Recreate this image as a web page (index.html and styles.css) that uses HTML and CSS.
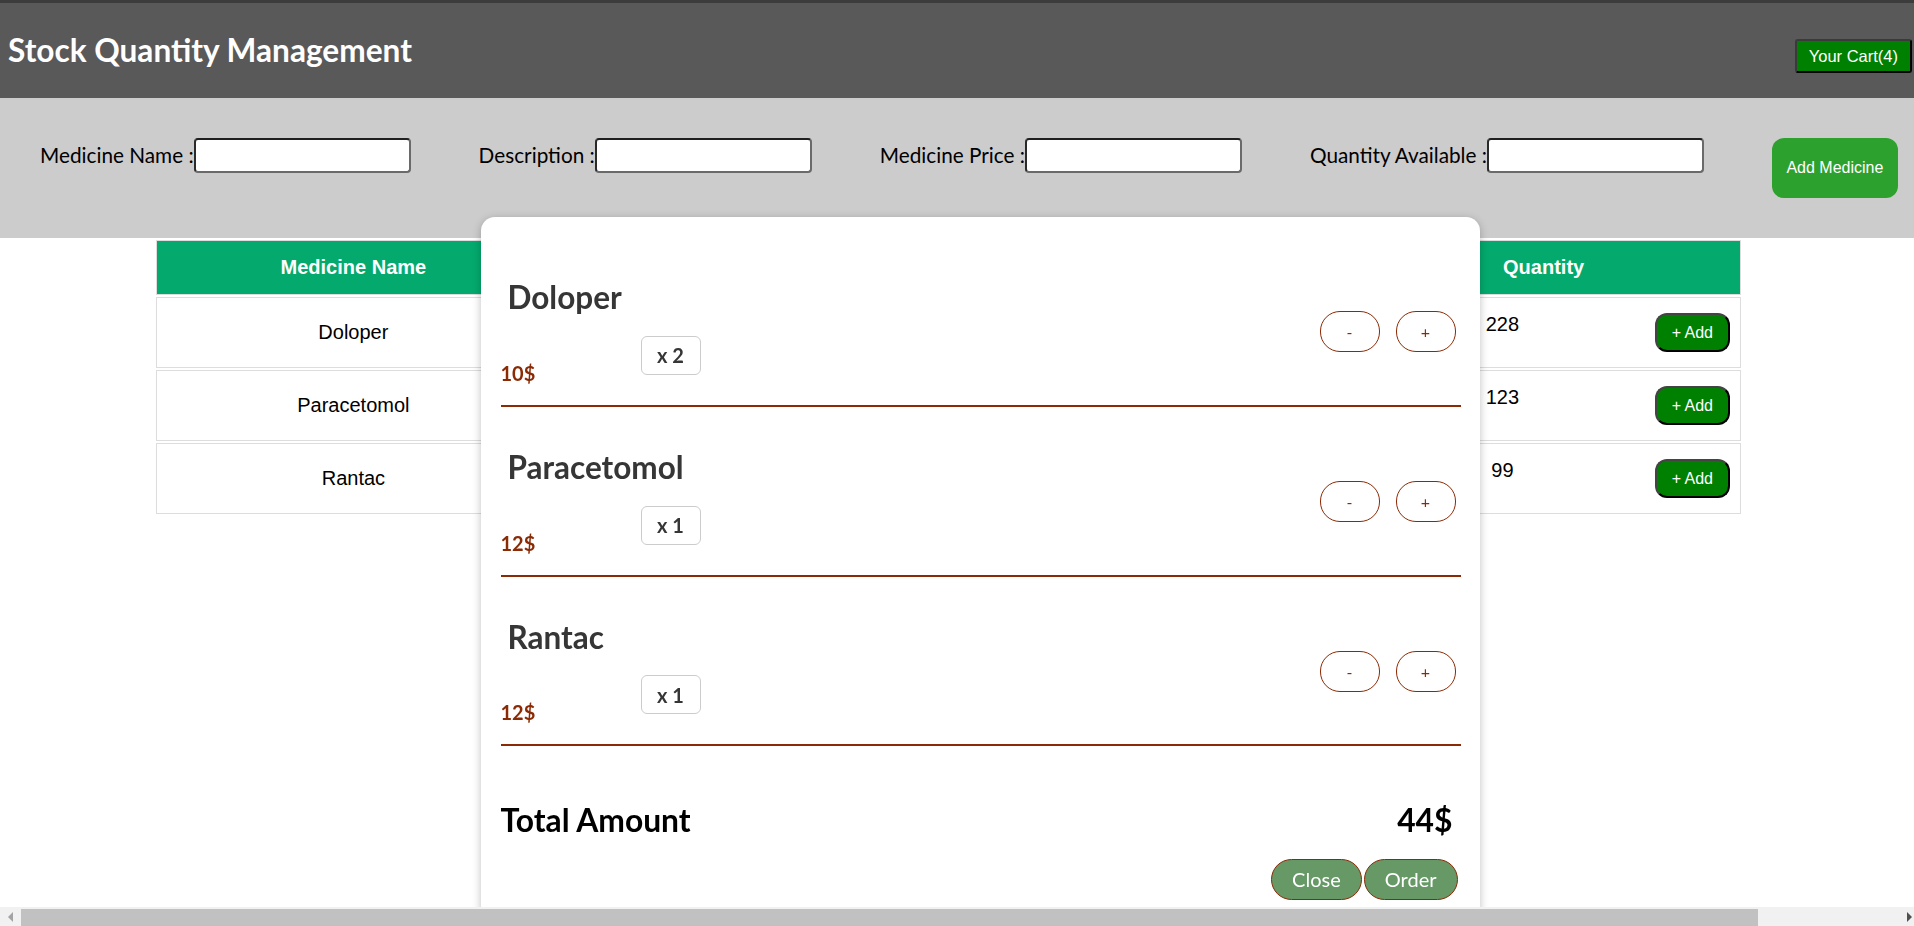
FILE: index.html
```html
<!DOCTYPE html>
<html lang="en">
<head>
<meta charset="utf-8">
<title>Stock Quantity Management</title>
<link rel="stylesheet" href="styles.css">
</head>
<body>
<header class="topbar">
  <h1 class="title">Stock Quantity Management</h1>
  <button class="cart-btn" type="button">Your Cart(4)</button>
</header>

<form class="med-form">
  <div class="field"><label for="m-name">Medicine Name :</label><input id="m-name" type="text"></div>
  <div class="field"><label for="m-desc">Description :</label><input id="m-desc" type="text"></div>
  <div class="field"><label for="m-price">Medicine Price :</label><input id="m-price" type="text"></div>
  <div class="field"><label for="m-qty">Quantity Available :</label><input id="m-qty" type="text"></div>
  <button class="add-med" type="button">Add Medicine</button>
</form>

<table class="stock">
  <thead>
    <tr><th>Medicine Name</th><th>Description</th><th>Price</th><th>Quantity</th></tr>
  </thead>
  <tbody>
    <tr><td>Doloper</td><td>For fever</td><td>10</td><td class="qty"><button class="add-btn" type="button">+ Add</button>228</td></tr>
    <tr><td>Paracetomol</td><td>For headache</td><td>12</td><td class="qty"><button class="add-btn" type="button">+ Add</button>123</td></tr>
    <tr><td>Rantac</td><td>For acidity</td><td>12</td><td class="qty"><button class="add-btn" type="button">+ Add</button>99</td></tr>
  </tbody>
</table>

<div class="modal">
  <ul class="cart-items">
    <li class="cart-item">
      <div class="item-info">
        <h2 class="item-name">Doloper</h2>
        <div class="summary"><span class="price">10$</span><span class="amount">x 2</span></div>
      </div>
      <div class="qty-actions"><button type="button">-</button><button type="button">+</button></div>
    </li>
    <li class="cart-item">
      <div class="item-info">
        <h2 class="item-name">Paracetomol</h2>
        <div class="summary"><span class="price">12$</span><span class="amount">x 1</span></div>
      </div>
      <div class="qty-actions"><button type="button">-</button><button type="button">+</button></div>
    </li>
    <li class="cart-item">
      <div class="item-info">
        <h2 class="item-name">Rantac</h2>
        <div class="summary"><span class="price">12$</span><span class="amount">x 1</span></div>
      </div>
      <div class="qty-actions"><button type="button">-</button><button type="button">+</button></div>
    </li>
  </ul>
  <div class="total"><span>Total Amount</span><span>44$</span></div>
  <div class="modal-actions"><button type="button">Close</button><button type="button">Order</button></div>
</div>

<div class="hscroll">
  <span class="arrow arrow-left"></span>
  <span class="thumb"></span>
  <span class="arrow arrow-right"></span>
</div>
</body>
</html>
```

FILE: styles.css
```css
html, body {
  margin: 0;
  overflow: hidden;
}

body {
  font-family: Lato, "Open Sans", sans-serif;
  background: #fff;
  color: #000;
}

/* header */
.topbar {
  display: flex;
  justify-content: space-between;
  align-items: center;
  height: 95px;
  border-top: 3px solid #3c3c3c;
  background: #595959;
}

.title {
  margin: 0 0 0 8px;
  font: 700 31.6px/1.2 Lato, sans-serif;
  color: #fff;
}

.cart-btn {
  align-self: flex-start;
  margin: 36px 2px 0 0;
  padding: 6px 12px;
  font: 16.5px/18px "Liberation Sans", Arial, sans-serif;
  color: #fff;
  background: #008000;
  border: 2px solid;
  border-color: #3a3a3a #000 #000 #3a3a3a;
  border-radius: 3px;
}

/* form */
.med-form {
  display: flex;
  align-items: flex-start;
  gap: 68px;
  padding: 40px 0 40px 40px;
  background: #ccc;
}

.field {
  display: flex;
  align-items: center;
  height: 35px;
}

.field label {
  font-size: 20.75px;
  line-height: 1.2;
  color: #000;
}

.field input {
  width: 217px;
  height: 35px;
  box-sizing: border-box;
  padding: 1px 4px;
  border: 2px solid;
  border-color: #1f1f1f #6a6a6a #6a6a6a #2a2a2a;
  border-radius: 4px;
  background: #fff;
  font: 16px "Liberation Sans", Arial, sans-serif;
}

.add-med {
  height: 60px;
  padding: 0 14.5px;
  font: 16px/18px "Liberation Sans", Arial, sans-serif;
  color: #fff;
  background: #2da12d;
  border: 0;
  border-radius: 12px;
}

/* table */
.stock {
  margin-left: 154px;
  width: 1589px;
  table-layout: fixed;
  border-spacing: 2px;
  font: 20px "Liberation Sans", Arial, sans-serif;
}

.stock th {
  padding: 14px 10px 15px;
  line-height: 24px;
  font-weight: 700;
  color: #fff;
  background: #04aa6d;
  border: 1px solid #ddd;
}

.stock td {
  padding: 15px 10px;
  line-height: 23px;
  text-align: center;
  border: 1px solid #ddd;
}

.add-btn {
  float: right;
  margin-left: 7px;
  padding: 9px 15px;
  font: 16px/17px "Liberation Sans", Arial, sans-serif;
  color: #fff;
  background: #008000;
  border: 2px solid;
  border-color: #444 #000 #000 #444;
  border-radius: 12px;
}

/* cart modal */
.modal {
  position: fixed;
  left: 481px;
  top: 217px;
  width: 960px;
  padding: 20px 19.5px;
  background: #fff;
  border-radius: 14px;
  box-shadow: 0 2px 8px rgba(0, 0, 0, 0.25);
  z-index: 10;
}

.cart-items {
  list-style: none;
  margin: 0;
  padding: 0;
}

.cart-item {
  display: flex;
  justify-content: space-between;
  align-items: center;
  margin: 20px 0;
  padding: 22px 0 20px;
  border-bottom: 2px solid #8a2b06;
}

.item-name {
  margin: 0 0 19px 7px;
  font-size: 31.5px;
  line-height: 1.2;
  font-weight: 700;
  color: #363636;
}

.summary {
  display: flex;
  justify-content: space-between;
  align-items: flex-end;
  width: 200px;
}

.price {
  font-size: 20px;
  line-height: 1.2;
  font-weight: 700;
  color: #8a2b06;
}

.amount {
  width: 60px;
  box-sizing: border-box;
  margin-bottom: 10px;
  padding: 6.5px 0;
  text-align: center;
  font-size: 20px;
  line-height: 1.2;
  font-weight: 700;
  color: #363636;
  border: 1px solid #ccc;
  border-radius: 6px;
}

.qty-actions {
  display: flex;
}

.qty-actions button {
  width: 60px;
  height: 41px;
  margin-left: 16px;
  padding: 0;
  font: 16px Lato, sans-serif;
  color: #8a2b06;
  background: #fff;
  border: 1px solid #8a2b06;
  border-radius: 20px;
}

.qty-actions button:last-child {
  margin-right: 5px;
}

.total {
  display: flex;
  justify-content: space-between;
  align-items: center;
  margin: 56px 8px 0 0;
  font-size: 31.8px;
  line-height: 1.15;
  font-weight: 700;
}

.modal-actions {
  display: flex;
  justify-content: flex-end;
  gap: 2px;
  margin: 20px 3px 0 0;
}

.modal-actions button {
  padding: 7.5px 20px;
  font: 20px/24px Lato, sans-serif;
  color: #fff;
  background: #669966;
  border: 1px solid #8a2b06;
  border-radius: 25px;
}

/* horizontal scrollbar */
.hscroll {
  position: fixed;
  left: 0;
  right: 0;
  bottom: 0;
  height: 19px;
  display: flex;
  align-items: center;
  background: #f1f1f1;
  z-index: 20;
}

.arrow {
  width: 0;
  height: 0;
  border-top: 5px solid transparent;
  border-bottom: 5px solid transparent;
}

.arrow-left {
  margin-left: 8px;
  border-right: 5px solid #a3a3a3;
}

.thumb {
  align-self: flex-end;
  width: 1737px;
  height: 17px;
  margin-left: 8px;
  background: #c1c1c1;
}

.arrow-right {
  margin-left: auto;
  margin-right: 2px;
  border-left: 5px solid #505050;
}
```
